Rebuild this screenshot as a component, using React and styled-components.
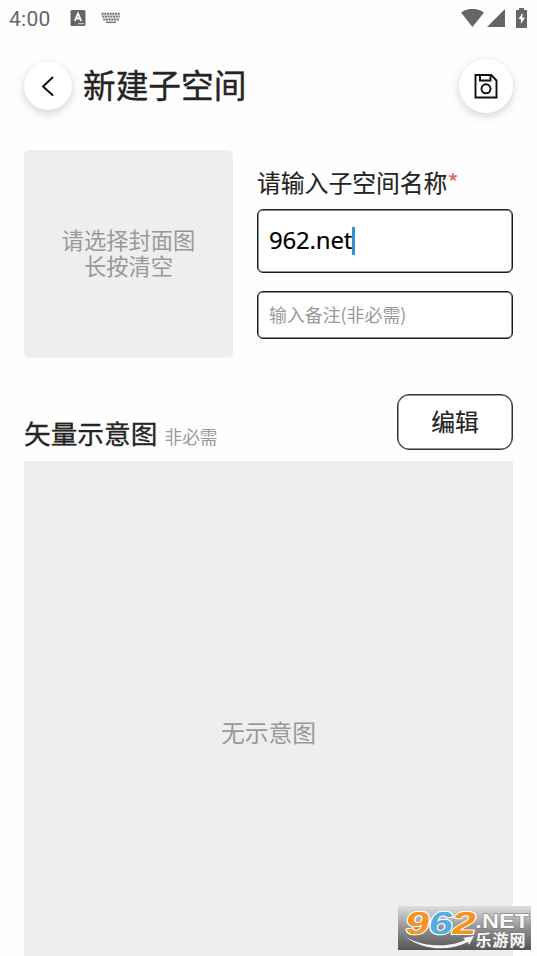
import React from 'react';
import styled, { createGlobalStyle } from 'styled-components';

const GlobalStyle = createGlobalStyle`
  * { box-sizing: border-box; }
  body { margin: 0; background: #fefefe; overflow: hidden; }
`;

const Screen = styled.main`
  position: relative;
  display: flex;
  flex-direction: column;
  width: 537px;
  height: 956px;
  overflow: hidden;
  background: #fefefe;
  color: #242424;
  font-family: "Noto Sans CJK SC", sans-serif;
`;

const StatusBar = styled.div`
  display: flex;
  align-items: center;
  flex: none;
  height: 37px;
  padding: 0 10px 0 9px;
  color: #666;
`;

const Clock = styled.span`
  width: 61px;
  font: 400 21px/24px Roboto, sans-serif;
  letter-spacing: 0.3px;
`;

const StatusIcons = styled.div`
  display: flex;
  align-items: center;
  gap: ${(p) => p.$gap}px;
  margin-top: -1px;
  margin-left: ${(p) => (p.$end ? 'auto' : '0')};
  svg { display: block; }
`;

const Header = styled.header`
  display: flex;
  align-items: center;
  flex: none;
  height: 98px;
  padding: 0 24px;
`;

const RoundButton = styled.button`
  display: flex;
  align-items: center;
  justify-content: center;
  flex: none;
  width: ${(p) => p.$size}px;
  height: ${(p) => p.$size}px;
  padding: 0;
  border: 0;
  border-radius: 50%;
  background: #fff;
  box-shadow: 0 3px 10px rgba(0, 0, 0, 0.18);
`;

const Title = styled.h1`
  flex: 1;
  margin: -4px 0 0 11px;
  font-size: 32.7px;
  font-weight: 400;
  line-height: 40px;
  -webkit-text-stroke: 0.4px currentColor;
`;

const Form = styled.section`
  display: flex;
  flex: none;
  gap: 24px;
  height: 223px;
  padding: 15px 24px 0;
`;

const Cover = styled.div`
  display: flex;
  align-items: center;
  justify-content: center;
  flex: none;
  width: 209px;
  height: 208px;
  padding-bottom: 4px;
  border-radius: 5px;
  background: #eee;
  color: #999;
  font-size: 22.3px;
  line-height: 26.5px;
  text-align: center;
`;

const Fields = styled.div`
  display: flex;
  flex-direction: column;
  flex: 1;
  padding-top: 14px;
`;

const Label = styled.label`
  height: 45px;
  font-size: 23.8px;
  line-height: 35px;
  white-space: nowrap;
  -webkit-text-stroke: 0.15px currentColor;
`;

const Required = styled.span`
  color: #e5635f;
`;

const Field = styled.div`
  display: flex;
  align-items: center;
  height: ${(p) => p.$height}px;
  margin-bottom: 18px;
  padding: 0 10px 0 11px;
  border: 1px solid #1c1c1c;
  border-radius: 6px;
  background: #fff;
  box-shadow: inset 0 0 0 0.5px #1c1c1c;
`;

const Value = styled.span`
  margin-top: -2px;
  color: #000;
  font: 400 24px/32px "Noto Sans", sans-serif;
  letter-spacing: -0.2px;
  -webkit-text-stroke: 0.15px currentColor;
`;

const Caret = styled.span`
  width: 3px;
  height: 28px;
  margin-top: -1px;
  background: #3390d5;
`;

const Placeholder = styled.span`
  margin-top: -3px;
  color: #999;
  font-size: 17.9px;
  line-height: 24px;
`;

const SectionHead = styled.div`
  display: flex;
  align-items: flex-start;
  justify-content: space-between;
  flex: none;
  height: 103px;
  padding: 36px 24px 0;
`;

const SectionTitle = styled.h2`
  display: flex;
  align-items: baseline;
  gap: 7px;
  margin: 19px 0 0;
  font-size: 26.7px;
  font-weight: 400;
  line-height: 40px;
  -webkit-text-stroke: 0.3px currentColor;
`;

const Optional = styled.small`
  color: #999;
  font-size: 17.7px;
  font-weight: 400;
  -webkit-text-stroke: 0;
`;

const EditButton = styled.button`
  width: 116px;
  height: 56px;
  padding: 0 0 2px;
  border: 1px solid #333;
  border-radius: 12px;
  background: #fff;
  color: #242424;
  font: 400 23.8px/34px "Noto Sans CJK SC", sans-serif;
  box-shadow: inset 0 0 0 0.5px #333;
  -webkit-text-stroke: 0.2px currentColor;
`;

const Canvas = styled.section`
  display: flex;
  justify-content: center;
  flex: 1;
  margin: 0 24px;
  padding-top: 253px;
  background: #eee;
  color: #999;
  font-size: 23.8px;
  line-height: 35px;
`;

const Watermark = styled.svg`
  position: absolute;
  right: 6px;
  bottom: 6px;
  width: 133px;
  height: 44px;
`;

function KeyboardIcon() {
  return (
    <svg width="20" height="12" viewBox="0 0 20 12" fill="none" stroke="#777">
      <path d="M.5 1.8h19M1.2 4.6h17.6M2.2 7.4h15.6" strokeWidth="2" strokeDasharray="2.1 .6" />
      <path d="M5 10.3h10" strokeWidth="1.5" />
    </svg>
  );
}

function SiteMark() {
  return (
    <Watermark viewBox="0 0 133 44">
      <defs>
        <linearGradient id="plate" x1="0" y1="0" x2="0" y2="1">
          <stop offset="0" stopColor="#dedede" />
          <stop offset=".5" stopColor="#929292" />
          <stop offset="1" stopColor="#555" />
        </linearGradient>
      </defs>
      <path fill="url(#plate)" d="M0 0h133v44H0z" />
      <g
        transform="translate(0 27.5) skewX(-10)"
        fontFamily="Liberation Sans, sans-serif"
        fontWeight="700"
        fontSize="32"
        stroke="#fff"
        strokeWidth="2"
        strokeLinejoin="round"
        paintOrder="stroke"
      >
        <text fill="#f7941f" textLength="24" lengthAdjust="spacingAndGlyphs" x="6">9</text>
        <text fill="#53ade0" textLength="24" lengthAdjust="spacingAndGlyphs" x="29.5">6</text>
        <text fill="#f7941f" textLength="24" lengthAdjust="spacingAndGlyphs" x="52.5">2</text>
      </g>
      <path fill="#f5f5f5" d="M8 31c16 10 43 11 59 3l-2-2 11-2-5 9-1-3c-20 10-46 8-62-5z" />
      <g fill="#f8f8f8" stroke="#777" strokeWidth="1" paintOrder="stroke" fontWeight="700">
        <text x="77" y="22.3" fontFamily="Liberation Sans, sans-serif" fontSize="20" textLength="7" lengthAdjust="spacingAndGlyphs">.</text>
        <text x="84" y="22.3" fontFamily="Liberation Sans, sans-serif" fontSize="20" textLength="47" lengthAdjust="spacingAndGlyphs">NET</text>
        <text x="77.5" y="40" fontFamily="Noto Sans CJK SC, sans-serif" fontSize="16" textLength="50" lengthAdjust="spacing">乐游网</text>
      </g>
    </Watermark>
  );
}

export default function App() {
  return (
    <>
      <GlobalStyle />
      <Screen>
        <StatusBar>
          <Clock>4:00</Clock>
          <StatusIcons $gap={15}>
            <svg width="16" height="16" viewBox="0 0 16 16">
              <rect x=".5" width="15" height="16" rx="1.5" fill="#666" />
              <path d="M4.7 11 8 3.5l3.3 7.5M6 8.5h4" fill="none" stroke="#fff" strokeWidth="1.8" />
              <path d="M8 13.7h6" stroke="#ddd" />
            </svg>
            <KeyboardIcon />
          </StatusIcons>
          <StatusIcons $end $gap={3}>
            <svg width="23" height="18" viewBox="0 0 23 18">
              <path d="M0 3.5Q11.5-4 23 3.5L11.5 18z" fill="#666" />
            </svg>
            <svg width="18" height="18" viewBox="0 0 18 18">
              <path d="M0 18 18 0v18z" fill="#666" />
            </svg>
            <svg width="19" height="20" viewBox="0 0 19 20">
              <path d="M8 2h3V0h5v2h3v18H8z" fill="#666" />
              <path d="m14.5 5-4 6h2.4v5l4-6.2h-2.4z" fill="#fff" />
            </svg>
          </StatusIcons>
        </StatusBar>
        <Header>
          <RoundButton $size={48} aria-label="返回">
            <svg width="24" height="24" viewBox="0 0 24 24" fill="none" stroke="#111" strokeWidth="2" strokeLinecap="round" strokeLinejoin="round">
              <path d="m16.5 3.5-9.5 9 9.5 8.5" />
            </svg>
          </RoundButton>
          <Title>新建子空间</Title>
          <RoundButton $size={54} aria-label="保存">
            <svg width="24" height="26" viewBox="0 0 24 26" fill="none" stroke="#111" strokeWidth="1.9">
              <path d="M1.5 2h15.7l5.3 5.5V24.5h-21z" />
              <path d="M6 2v5.5h10.5V2" />
              <circle cx="12" cy="15.8" r="4.5" />
            </svg>
          </RoundButton>
        </Header>
        <Form>
          <Cover>请选择封面图<br />长按清空</Cover>
          <Fields>
            <Label>请输入子空间名称<Required>*</Required></Label>
            <Field $height={64}>
              <Value>962.net</Value>
              <Caret />
            </Field>
            <Field $height={48}>
              <Placeholder>输入备注(非必需)</Placeholder>
            </Field>
          </Fields>
        </Form>
        <SectionHead>
          <SectionTitle>矢量示意图<Optional>非必需</Optional></SectionTitle>
          <EditButton>编辑</EditButton>
        </SectionHead>
        <Canvas>无示意图</Canvas>
        <SiteMark />
      </Screen>
    </>
  );
}
